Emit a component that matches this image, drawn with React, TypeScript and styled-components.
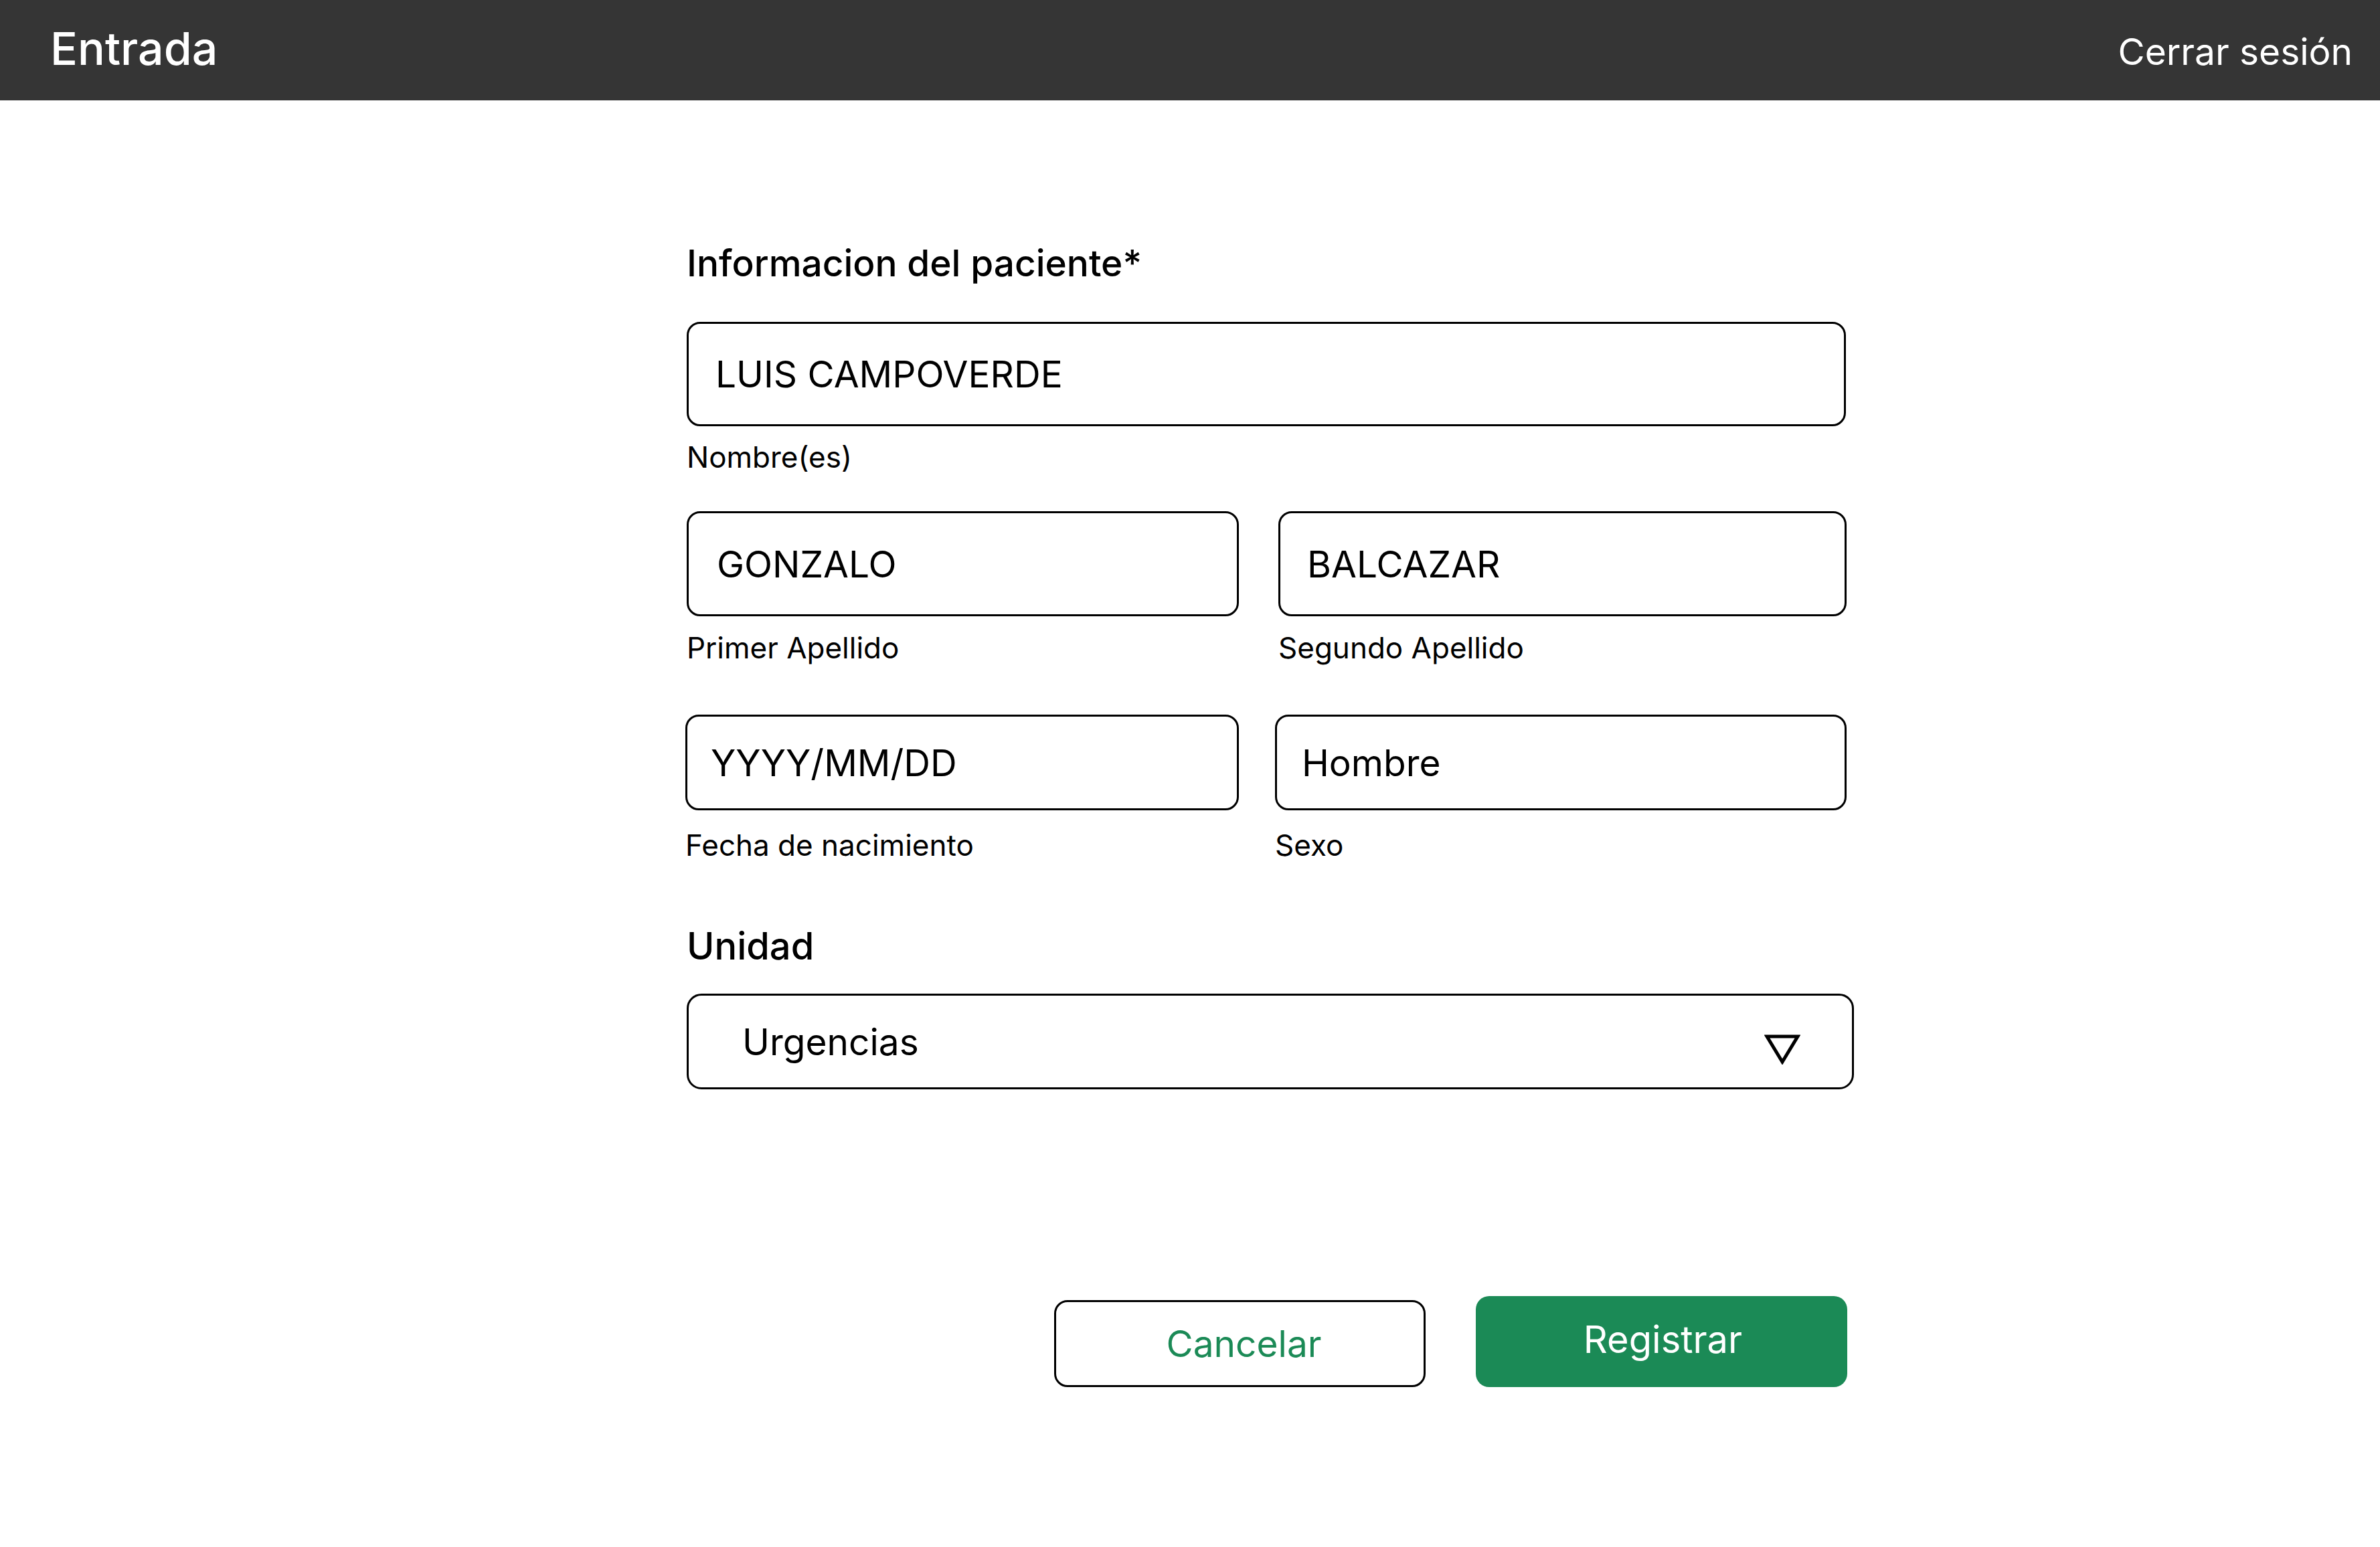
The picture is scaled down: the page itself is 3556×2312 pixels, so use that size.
import React from 'react'
import styled, { createGlobalStyle } from 'styled-components'

const GlobalStyle = createGlobalStyle`
  html, body {
    margin: 0;
    padding: 0;
    background: #ffffff;
    font-family: Inter, "Noto Sans", "Liberation Sans", sans-serif;
    color: #000000;
  }
`

const Page = styled.div`
  width: 3556px;
  min-height: 2312px;
  background: #ffffff;
`

const TopBar = styled.header`
  height: 150px;
  background: #353535;
  display: flex;
  align-items: center;
  justify-content: space-between;
  padding: 0 41px 0 75px;
  color: #ffffff;
`

const BarTitle = styled.div`
  font-size: 68px;
  font-weight: 500;
  margin-top: -6px;
`

const LogoutLink = styled.div`
  font-size: 55px;
  font-weight: 400;
  margin-top: 4px;
`

const Main = styled.main`
  padding: 210px 0 0 1026px;
  width: 1744px;
`

const SectionTitle = styled.h2<{ $size: number; $top: number }>`
  margin: ${p => p.$top}px 0 0 0;
  font-size: ${p => p.$size}px;
  font-weight: 500;
  line-height: 1.2;
`

const FieldRow = styled.div<{ $gap: number; $top: number }>`
  display: grid;
  grid-template-columns: 825px 1fr;
  column-gap: ${p => p.$gap}px;
  width: 1733px;
  margin-top: ${p => p.$top}px;
`

const Field = styled.div<{ $top?: number }>`
  display: flex;
  flex-direction: column;
  margin-top: ${p => p.$top ?? 0}px;
`

const InputBox = styled.div<{ $height: number; $pad: number }>`
  box-sizing: border-box;
  height: ${p => p.$height}px;
  border: 3px solid #000000;
  border-radius: 20px;
  display: flex;
  align-items: center;
  padding-left: ${p => p.$pad}px;
  font-size: 55px;
  font-weight: 400;
`

const Caption = styled.div<{ $gap: number }>`
  margin-top: ${p => p.$gap}px;
  font-size: 44px;
  line-height: 51px;
`

const SelectBox = styled.div`
  box-sizing: border-box;
  width: 1744px;
  height: 143px;
  margin-top: 37px;
  border: 3px solid #000000;
  border-radius: 22px;
  display: flex;
  align-items: center;
  justify-content: space-between;
  padding: 0 77px 0 80px;
  font-size: 55px;
`

const Arrow = styled.svg`
  width: 54px;
  height: 46px;
  margin-top: 22px;
`

const Actions = styled.div`
  display: flex;
  justify-content: flex-end;
  align-items: flex-end;
  gap: 75px;
  width: 1734px;
  margin-top: 309px;
`

const Button = styled.button<{ $primary?: boolean }>`
  box-sizing: border-box;
  width: 555px;
  height: ${p => (p.$primary ? 136 : 130)}px;
  border-radius: 20px;
  border: ${p => (p.$primary ? 'none' : '3px solid #000000')};
  background: ${p => (p.$primary ? '#1b8a56' : '#ffffff')};
  color: ${p => (p.$primary ? '#ffffff' : '#1b8a56')};
  font-family: Inter, "Noto Sans", "Liberation Sans", sans-serif;
  font-size: ${p => (p.$primary ? 56 : 55)}px;
  padding: 0 0 ${p => (p.$primary ? 6 : 0)}px ${p => (p.$primary ? 4 : 12)}px;
  display: flex;
  align-items: center;
  justify-content: center;
`

export default function App() {
  return (
    <Page>
      <GlobalStyle />
      <TopBar>
        <BarTitle>Entrada</BarTitle>
        <LogoutLink>Cerrar sesión</LogoutLink>
      </TopBar>
      <Main>
        <SectionTitle $size={55} $top={0}>Informacion del paciente*</SectionTitle>

        <Field $top={55} style={{ width: 1732 }}>
          <InputBox $height={156} $pad={40}>LUIS CAMPOVERDE</InputBox>
          <Caption $gap={21}>Nombre(es)</Caption>
        </Field>

        <FieldRow $gap={59} $top={55}>
          <Field>
            <InputBox $height={157} $pad={42}>GONZALO</InputBox>
            <Caption $gap={22}>Primer Apellido</Caption>
          </Field>
          <Field>
            <InputBox $height={157} $pad={40}>BALCAZAR</InputBox>
            <Caption $gap={22}>Segundo Apellido</Caption>
          </Field>
        </FieldRow>

        <FieldRow $gap={54} $top={74}>
          <Field style={{ marginLeft: -2 }}>
            <InputBox $height={143} $pad={35}>YYYY/MM/DD</InputBox>
            <Caption $gap={27}>Fecha de nacimiento</Caption>
          </Field>
          <Field>
            <InputBox $height={143} $pad={37}>Hombre</InputBox>
            <Caption $gap={27}>Sexo</Caption>
          </Field>
        </FieldRow>

        <SectionTitle $size={56} $top={92}>Unidad</SectionTitle>

        <SelectBox>
          <span>Urgencias</span>
          <Arrow viewBox="0 0 54 46">
            <path d="M4 4 L50 4 L27 42 Z" fill="none" stroke="#000" strokeWidth="5" strokeLinejoin="miter" />
          </Arrow>
        </SelectBox>

        <Actions>
          <Button>Cancelar</Button>
          <Button $primary>Registrar</Button>
        </Actions>
      </Main>
    </Page>
  )
}
